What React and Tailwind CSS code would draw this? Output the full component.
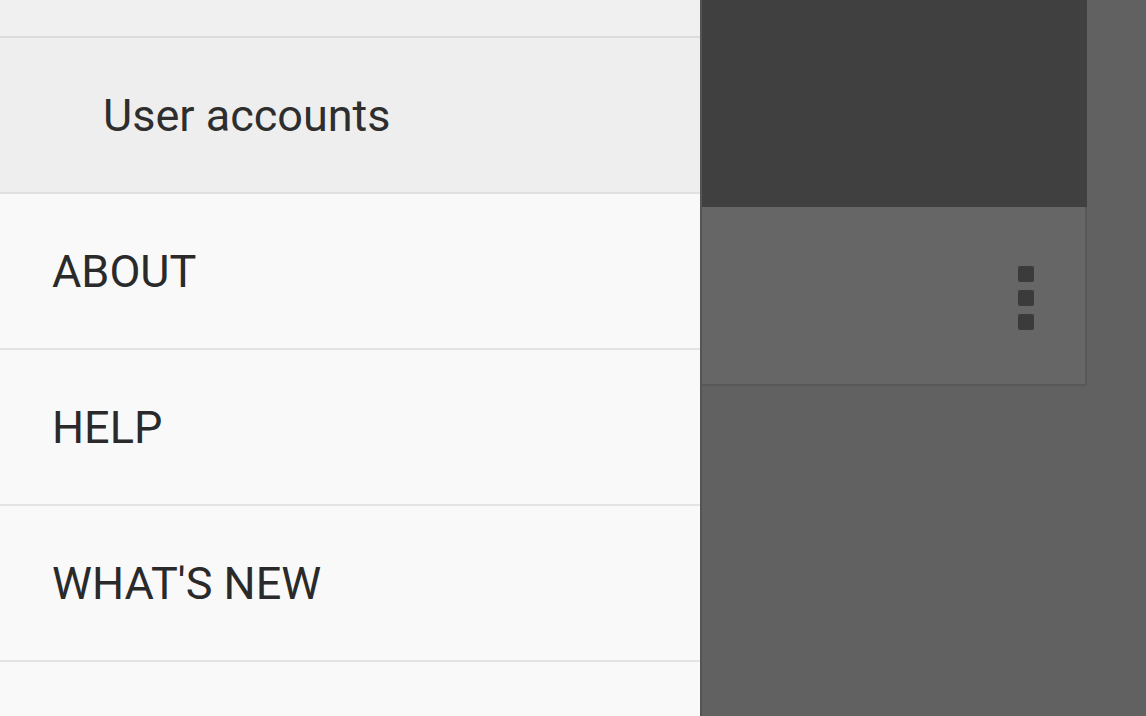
export default function App() {
  const items = ["ABOUT", "HELP", "WHAT'S NEW"];

  return (
    <div
      className="flex h-[716px] w-[1146px] overflow-hidden bg-[#616161]"
      style={{ fontFamily: "Roboto, 'Noto Sans', sans-serif" }}
    >
      {/* Drawer */}
      <div className="flex w-[702px] shrink-0 flex-col bg-[#f9f9f9] border-r-2 border-[#545454]">
        <div className="h-[38px] shrink-0 border-b-2 border-[#dcdcdc] bg-[#f0f0f0]" />
        <div className="flex h-[156px] shrink-0 items-center border-b-2 border-[#e0e0e0] bg-[#eeeeee] pl-[103px] pt-[2px] text-[45px] text-[#2e2e2e]">
          User accounts
        </div>
        {items.map((label) => (
          <div
            key={label}
            className="flex h-[156px] shrink-0 items-center border-b-2 border-[#e3e3e3] pl-[52px] pt-[2px] text-[45px] text-[#2a2a2a]"
          >
            {label}
          </div>
        ))}
        <div className="flex-1" />
      </div>

      {/* Dimmed content */}
      <div className="flex flex-1">
        <div className="flex w-[385px] flex-col">
          <div className="h-[207px] bg-[#404040]" />
          <div className="flex h-[179px] items-center justify-end border-b-2 border-r-2 border-[#585858] bg-[#666666] pr-[51px] pt-[4px]">
            <div className="flex flex-col gap-[8px]">
              <span className="h-[16px] w-[16px] rounded-[2px] bg-[#3b3b3b]" />
              <span className="h-[16px] w-[16px] rounded-[2px] bg-[#3b3b3b]" />
              <span className="h-[16px] w-[16px] rounded-[2px] bg-[#3b3b3b]" />
            </div>
          </div>
        </div>
      </div>
    </div>
  );
}
